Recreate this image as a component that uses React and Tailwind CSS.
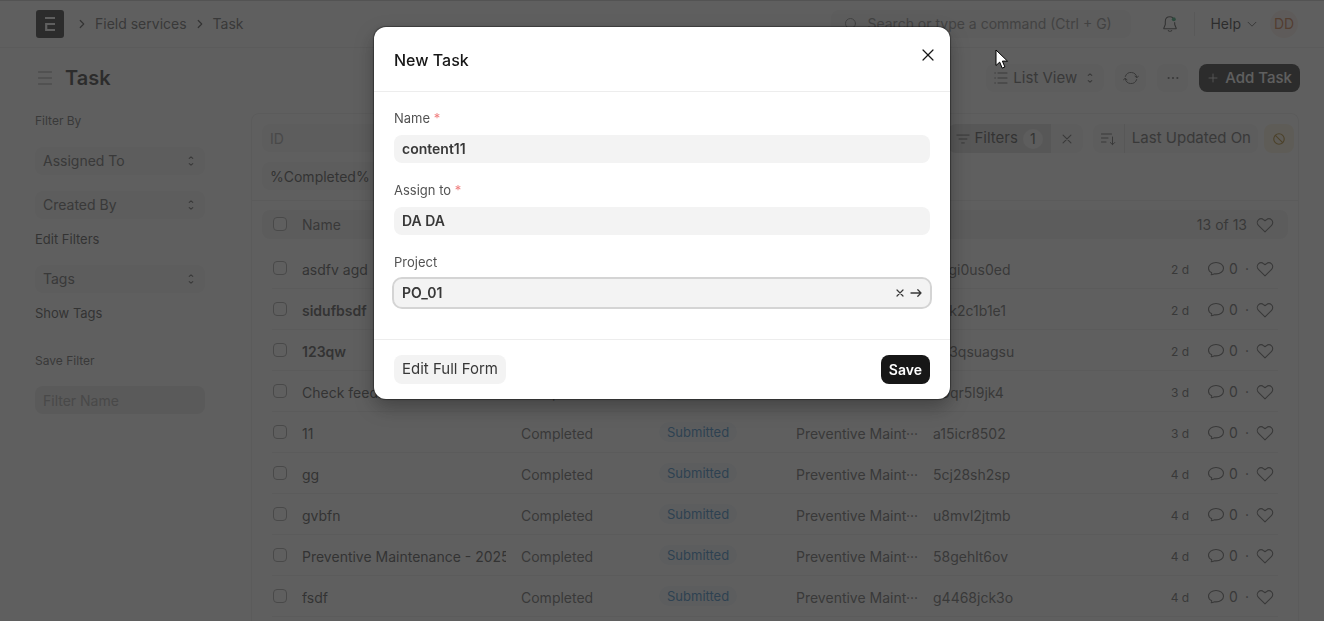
import React from "react";

const rows = [
  { name: "asdfv agd", id: "7vgi0us0ed", age: "2 d" },
  { name: "sidufbsdf", id: "9kk2c1b1e1", age: "2 d", unread: true },
  { name: "123qw", id: "pv3qsuagsu", age: "2 d", unread: true },
  { name: "Check feedback", id: "e0qr5l9jk4", age: "3 d" },
  { name: "11", id: "a15icr8502", age: "3 d" },
  { name: "gg", id: "5cj28sh2sp", age: "4 d" },
  { name: "gvbfn", id: "u8mvl2jtmb", age: "4 d" },
  { name: "Preventive Maintenance - 2025", id: "58gehlt6ov", age: "4 d" },
  { name: "fsdf", id: "g4468jck3o", age: "4 d" },
];

function Icon({ size = 16, className = "", children, viewBox = "0 0 16 16", width = 1 }) {
  return (
    <svg
      width={size}
      height={size}
      viewBox={viewBox}
      fill="none"
      stroke="currentColor"
      strokeWidth={width}
      strokeLinecap="round"
      strokeLinejoin="round"
      className={`shrink-0 ${className}`}
      aria-hidden="true"
    >
      {children}
    </svg>
  );
}

const ChevronRight = () => (
  <Icon size={14} width={1.4} className="text-[#383838]">
    <path d="M6 4l4 4-4 4" />
  </Icon>
);

const UpDown = () => (
  <Icon size={14} width={1.3}>
    <path d="M6 5L8 3.200l2 1.800M6 11l2 1.800 2-1.800" />
  </Icon>
);

const Heart = () => (
  <Icon size={18} viewBox="0 0 18 18" width={1.1}>
    <path d="M9 15.800L2.400 9.300C.9 7.800.9 5.400 2.400 3.900 3.900 2.500 6.200 2.500 7.700 3.800L9 4.700l1.300-.9c1.500-1.300 3.800-1.300 5.300.1 1.500 1.500 1.500 3.900 0 5.400L9 15.800z" />
  </Icon>
);

const Comment = () => (
  <Icon size={18} viewBox="0 0 18 18" width={1.1}>
    <path d="M4.200 14.800c.4-.5.6-1.200.5-2C2.700 11.900 1.500 10.300 1.500 8.300 1.500 5 4.800 2.500 9 2.500s7.500 2.500 7.500 5.700-3.300 5.700-7.500 5.700c-.5 0-1 0-1.500-.1-1 .6-2.100 1-3.300 1z" />
  </Icon>
);

function Check({ label }) {
  return (
    <input
      type="checkbox"
      aria-label={label}
      className="block h-[14px] w-[14px] appearance-none rounded border border-[#999999] bg-white"
    />
  );
}

function Navbar() {
  return (
    <header className="flex h-12 items-center border-t border-b border-t-[#c7c7c7] border-b-[#ededed] pl-9 pr-[26px]">
      <a href="#home" aria-label="Home" className="mr-[11px]">
        <svg width="28" height="28" viewBox="0 0 28 28" aria-hidden="true">
          <rect width="28" height="28" rx="3" fill="#171717" />
          <path d="M9 8h10M19 14h-8.800v6H19" fill="none" stroke="#fff" strokeWidth="2.200" />
        </svg>
      </a>
      <nav aria-label="Breadcrumb" className="flex items-center text-sm text-[#525252]">
        <ChevronRight />
        <a href="#field-services" className="mx-1.5">Field services</a>
        <ChevronRight />
        <a href="#task" className="ml-1.5">Task</a>
      </nav>
      <div className="ml-auto flex h-7 w-[300px] items-center gap-2 rounded-lg bg-[#f3f3f3] px-3 text-[#7c7c7c]">
        <Icon size={16}>
          <circle cx="7.500" cy="7.500" r="5" />
          <path d="M11.200 11.200l2.300 2.300" />
        </Icon>
        <input
          type="text"
          aria-label="Search"
          placeholder="Search or type a command (Ctrl + G)"
          className="min-w-0 flex-1 bg-transparent text-sm placeholder:text-[#7c7c7c]"
        />
      </div>
      <button aria-label="Notifications" className="ml-[30px] text-[#383838]">
        <Icon size={18} viewBox="0 0 18 18" width={1.1}>
          <path d="M9 1.800c-2.900 0-4.700 2-4.700 4.700v3L2.800 13.200c-.1.300.1.600.4.600h11.600c.3 0 .5-.3.4-.6L13.700 9.500v-2M9 1.800c1 0 1.800.2 2.500.6M7.300 15.700c.8.800 2.600.8 3.400 0" />
          <circle cx="12.800" cy="4.200" r="2" fill="#1f9d63" stroke="none" />
        </Icon>
      </button>
      <div className="mx-[15px] h-6 w-px bg-[#e2e2e2]" />
      <button className="flex items-center gap-1 text-sm text-[#171717]">
        Help
        <Icon size={14} className="text-[#383838]">
          <path d="M3.500 6L8 10.500 12.500 6" />
        </Icon>
      </button>
      <button aria-label="Account" className="ml-[11px] h-7 w-7 rounded-full bg-[#fbeee6] text-sm text-[#c8682f]">
        DD
      </button>
    </header>
  );
}

function PageHead() {
  const button = "flex h-7 items-center justify-center rounded-lg bg-[#f3f3f3] text-[#525252]";
  return (
    <div className="flex h-[60px] items-center pl-[37px] pr-6">
      <button aria-label="Toggle sidebar" className="mr-3 text-[#7c7c7c]">
        <Icon>
          <path d="M1.500 2h13M1.500 8h13M1.500 14h13" />
        </Icon>
      </button>
      <h1 className="text-xl font-semibold text-[#171717]">Task</h1>
      <div className="ml-auto flex gap-[11px] text-[15px]">
        <button className={`${button} gap-1 px-[7px]`}>
          <Icon>
            <path d="M5 3h9M5 8h9M5 13h9M1.800 3h.6M1.800 8h.6M1.800 13h.6" />
          </Icon>
          List View
          <span className="ml-0.5 flex"><UpDown /></span>
        </button>
        <button aria-label="Refresh" className={`${button} w-[31px]`}>
          <Icon>
            <path d="M2.300 6.500A6 6 0 0 1 13.900 7.500M13.700 9.500A6 6 0 0 1 2.100 8.500M.5 10l1.600-1.800L4 9.800M12 6.200l1.900 1.600L15.500 6" />
          </Icon>
        </button>
        <button aria-label="More" className={`${button} w-[31px]`}>
          <Icon size={14}>
            <g fill="currentColor" stroke="none">
              <circle cx="3" cy="8" r="1.200" />
              <circle cx="8" cy="8" r="1.200" />
              <circle cx="13" cy="8" r="1.200" />
            </g>
          </Icon>
        </button>
        <button className="flex h-7 items-center gap-1.5 rounded-lg bg-[#171717] px-2 font-medium text-white">
          <Icon size={12} viewBox="0 0 12 12" className="text-[#c7c7c7]">
            <path d="M6 2v8M2 6h8" />
          </Icon>
          Add Task
        </button>
      </div>
    </div>
  );
}

function SideSelect({ label }) {
  return (
    <button className="flex h-7 w-full items-center justify-between rounded-lg bg-[#f3f3f3] pl-2 pr-[7px] text-sm text-[#525252]">
      {label}
      <UpDown />
    </button>
  );
}

function Sidebar() {
  return (
    <aside className="w-[170px] shrink-0 text-[13px] leading-4 text-[#383838]">
      <p className="mb-[18px] text-xs leading-4 text-[#525252]">Filter By</p>
      <SideSelect label="Assigned To" />
      <div className="mt-4">
        <SideSelect label="Created By" />
      </div>
      <a href="#edit-filters" className="mt-3 mb-[18px] block">Edit Filters</a>
      <SideSelect label="Tags" />
      <a href="#show-tags" className="mt-3 block">Show Tags</a>
      <label htmlFor="filter-name" className="mt-8 block text-xs leading-4 text-[#525252]">Save Filter</label>
      <input
        id="filter-name"
        type="text"
        placeholder="Filter Name"
        className="mt-[17px] h-7 w-full rounded-lg bg-[#e6e6e6] px-2 text-sm placeholder:text-[#999999]"
      />
    </aside>
  );
}

function FilterBar() {
  return (
    <div className="flex items-start justify-between border-b border-[#ededed] pt-[10px] pr-1 pb-[10px] pl-[10px] text-[15px] text-[#525252]">
      <div className="flex w-[160px] flex-col gap-[10px] text-sm">
        <input
          type="text"
          aria-label="ID"
          placeholder="ID"
          className="h-7 rounded-lg bg-[#f3f3f3] px-2 placeholder:text-[#999999]"
        />
        <input
          type="text"
          aria-label="Status"
          defaultValue="%Completed%"
          className="h-7 rounded-lg bg-[#f3f3f3] px-2 text-[#383838]"
        />
      </div>
      <div className="flex">
        <button className="flex h-[29px] items-center rounded-l-lg bg-[#dcdcdc] pr-2 pl-2 text-[#383838]">
          <Icon size={14} className="mr-1">
            <path d="M1 3.500h14M3.500 8h9M6.500 12.500h3" />
          </Icon>
          Filters
          <span className="ml-[5px] flex h-5 w-5 items-center justify-center rounded-full bg-[#f3f3f3] text-sm">1</span>
        </button>
        <button aria-label="Clear filters" className="flex h-[29px] w-8 items-center justify-center rounded-r-lg bg-[#f3f3f3]">
          <Icon size={14} width={1.200}>
            <path d="M3.500 3.500l9 9M12.500 3.500l-9 9" />
          </Icon>
        </button>
        <button aria-label="Sort order" className="ml-[10px] flex h-[29px] w-8 items-center justify-center rounded-l-lg border-r border-[#dcdcdc] bg-[#f3f3f3]">
          <Icon>
            <path d="M1.500 3h10M1.500 7h6.500M1.500 11h4.500M12.500 6v7.500M10.300 11.500l2.200 2.200 2.200-2.200" />
          </Icon>
        </button>
        <button className="h-[29px] rounded-r-lg bg-[#f3f3f3] px-[7px]">Last Updated On</button>
        <button aria-label="Disable updates" className="ml-1.5 flex h-[29px] w-[30px] items-center justify-center rounded-lg bg-[#f8f0dc] text-[#a8790c]">
          <Icon size={14} width={1.3}>
            <circle cx="8" cy="8" r="6" />
            <path d="M3.800 3.800l8.400 8.400" />
          </Icon>
        </button>
      </div>
    </div>
  );
}

function TaskTable() {
  const cell = "border-b border-[#ededed] p-0 pt-1";
  return (
    <div className="px-[10px] pt-[9px]">
      <table className="w-full table-fixed border-separate border-spacing-0 text-left text-sm text-[#525252]">
        <colgroup>
          <col className="w-[10px]" />
          <col className="w-[30px]" />
          <col className="w-[219px]" />
          <col className="w-[138px]" />
          <col className="w-[137px]" />
          <col className="w-[137px]" />
          <col />
          <col className="w-[150px]" />
          <col className="w-[10px]" />
        </colgroup>
        <thead>
          <tr className="h-[29px] [&>*]:bg-[#f0f0f0] [&>*]:p-0 [&>*]:font-normal">
            <td className="rounded-l-lg" />
            <th>
              <div className="flex h-6 pt-1 pl-px"><Check label="Select all" /></div>
            </th>
            <th>Name</th>
            <th>Status</th>
            <th />
            <th>Type</th>
            <th>ID</th>
            <th>
              <div className="flex items-center justify-end gap-[9px] pr-1">
                13 of 13
                <Heart />
              </div>
            </th>
            <td className="rounded-r-lg" />
          </tr>
        </thead>
        <tbody>
          {rows.map((row, i) => (
            <tr key={row.id} className={i === 0 ? "h-[50px] [&>td]:pt-[13px]" : "h-[41px]"}>
              <td className="p-0" />
              <td className={cell}>
                <div className="-mt-1 pl-px"><Check label={`Select ${row.name}`} /></div>
              </td>
              <td className={cell}>
                <a
                  href={`#${row.id}`}
                  className={`mr-[15px] block overflow-hidden whitespace-nowrap text-[#383838] ${row.unread ? "font-semibold" : ""}`}
                >
                  {row.name}
                </a>
              </td>
              <td className={cell}>Completed</td>
              <td className={cell}>
                <span className="-mt-1 block w-fit rounded-full bg-[#eff5fa] px-2 text-[13px] leading-5 text-[#2078c0]">
                  Submitted
                </span>
              </td>
              <td className={cell}>Preventive Maint···</td>
              <td className={cell}>{row.id}</td>
              <td className={cell}>
                <div className="-mt-0.5 flex items-center justify-end pr-1">
                  <span className="mr-[18px] pt-0.5 text-xs">{row.age}</span>
                  <Comment />
                  <span className="ml-1">0</span>
                  <span className="mx-[7px]">·</span>
                  <Heart />
                </div>
              </td>
              <td className="p-0" />
            </tr>
          ))}
        </tbody>
      </table>
    </div>
  );
}

function Field({ id, label, required, value, focused }) {
  return (
    <div>
      <label htmlFor={id} className="mb-[9px] block text-[13px] leading-4 text-[#525252]">
        {label}
        {required && <span className="text-[#f08080]"> *</span>}
      </label>
      <div
        className={`flex h-7 items-center rounded-lg bg-[#f3f3f3] px-2 ${
          focused ? "outline-2 outline-[#d4d4d4]" : ""
        }`}
      >
        <input
          id={id}
          type="text"
          defaultValue={value}
          className="min-w-0 flex-1 bg-transparent text-sm font-semibold text-[#383838] outline-none"
        />
        {focused && (
          <div className="flex items-center gap-0.5 text-[#383838]">
            <button aria-label="Clear">
              <Icon size={12} viewBox="0 0 12 12" width={1.200}>
                <path d="M3 3l6 6M9 3L3 9" />
              </Icon>
            </button>
            <button aria-label="Open project" className="-mr-0.5">
              <Icon size={16} width={1.300}>
                <path d="M3 8h10M9.800 4.800L13 8l-3.200 3.200" />
              </Icon>
            </button>
          </div>
        )}
      </div>
    </div>
  );
}

function NewTaskDialog() {
  return (
    <div className="fixed inset-0 flex items-start justify-center bg-[#323232]/78 pt-[27px]">
      <div
        role="dialog"
        aria-labelledby="dialog-title"
        className="w-full max-w-[576px] rounded-xl bg-white shadow-[0_0_1px_1px_rgba(0,0,0,0.35),0_8px_20px_rgba(0,0,0,0.3)]"
      >
        <div className="flex h-[65px] items-center justify-between border-b border-[#ededed] pt-px pr-[15px] pl-5">
          <h2 id="dialog-title" className="text-base font-medium text-[#171717]">New Task</h2>
          <button aria-label="Close" className="mb-[10px] text-[#171717]">
            <Icon size={14} width={1.400}>
              <path d="M2.300 2.300l11.400 11.400M13.700 2.300L2.300 13.700" />
            </Icon>
          </button>
        </div>
        <form className="flex flex-col gap-[19px] px-5 pt-[18px] pb-8">
          <Field id="name" label="Name" required value="content11" />
          <Field id="assign-to" label="Assign to" required value="DA DA" />
          <Field id="project" label="Project" value="PO_01" focused />
        </form>
        <div className="flex items-center justify-between border-t border-[#ededed] px-5 py-[15px] text-[15px]">
          <button className="h-[29px] rounded-lg bg-[#f3f3f3] px-2 text-[#383838]">Edit Full Form</button>
          <button className="h-[29px] rounded-lg bg-[#171717] px-2 text-sm font-semibold text-white">Save</button>
        </div>
      </div>
    </div>
  );
}

export default function App() {
  return (
    <div className="flex min-h-screen flex-col bg-white font-['Inter',sans-serif]">
      <Navbar />
      <PageHead />
      <div className="flex flex-1 gap-[46px] pt-[5px] pr-[25px] pl-[35px]">
        <Sidebar />
        <main className="min-w-0 flex-1 rounded-t-lg border border-b-0 border-[#ededed]">
          <FilterBar />
          <TaskTable />
        </main>
      </div>
      <NewTaskDialog />
      <svg className="fixed top-[49px] left-[995px]" width="14" height="21" viewBox="0 0 14 21" aria-hidden="true">
        <path
          d="M1 1v15.500l3.700-3.400 2.500 6 2.700-1.100-2.500-5.900H12.500z"
          fill="#fff"
          stroke="#000"
          strokeWidth="1"
          strokeLinejoin="round"
        />
      </svg>
    </div>
  );
}
